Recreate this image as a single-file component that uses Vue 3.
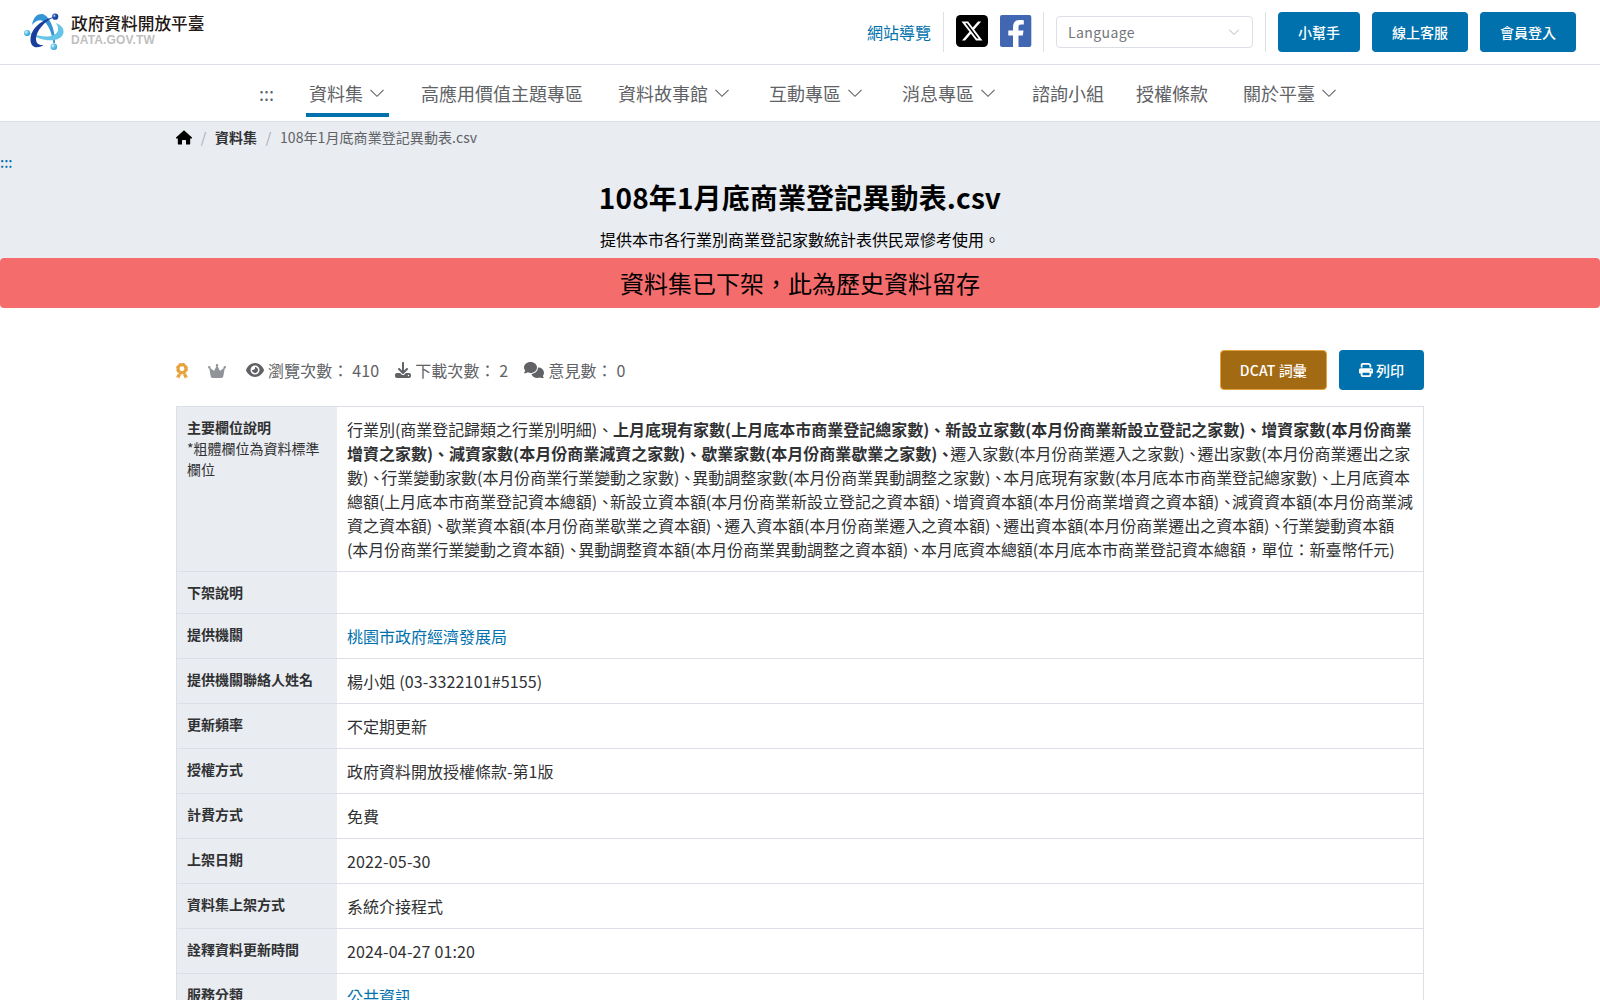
<script setup>
const nav = [
  { label: '資料集', sub: true, active: true },
  { label: '高應用價值主題專區' },
  { label: '資料故事館', sub: true },
  { label: '互動專區', sub: true },
  { label: '消息專區', sub: true },
  { label: '諮詢小組' },
  { label: '授權條款' },
  { label: '關於平臺', sub: true },
]
const actions = ['小幫手', '線上客服', '會員登入']

const fields = [
  { text: '行業別(商業登記歸類之行業別明細)' },
  { text: '上月底現有家數(上月底本市商業登記總家數)', std: true },
  { text: '新設立家數(本月份商業新設立登記之家數)', std: true },
  { text: '增資家數(本月份商業增資之家數)', std: true },
  { text: '減資家數(本月份商業減資之家數)', std: true },
  { text: '歇業家數(本月份商業歇業之家數)', std: true, tight: true },
  { text: '遷入家數(本月份商業遷入之家數)', tight: true },
  { text: '遷出家數(本月份商業遷出之家數)', tight: true },
  { text: '行業變動家數(本月份商業行業變動之家數)', tight: true },
  { text: '異動調整家數(本月份商業異動調整之家數)', tight: true },
  { text: '本月底現有家數(本月底本市商業登記總家數)', tight: true },
  { text: '上月底資本總額(上月底本市商業登記資本總額)', tight: true },
  { text: '新設立資本額(本月份商業新設立登記之資本額)', tight: true },
  { text: '增資資本額(本月份商業增資之資本額)', tight: true },
  { text: '減資資本額(本月份商業減資之資本額)', tight: true },
  { text: '歇業資本額(本月份商業歇業之資本額)', tight: true },
  { text: '遷入資本額(本月份商業遷入之資本額)', tight: true },
  { text: '遷出資本額(本月份商業遷出之資本額)', tight: true },
  { text: '行業變動資本額(本月份商業行業變動之資本額)', tight: true },
  { text: '異動調整資本額(本月份商業異動調整之資本額)', tight: true },
  { text: '本月底資本總額(本月底本市商業登記資本總額，單位：新臺幣仟元)', last: true },
]

const rows = [
  { label: '下架說明', value: '' },
  { label: '提供機關', value: '桃園市政府經濟發展局', link: true },
  { label: '提供機關聯絡人姓名', value: '楊小姐 (03-3322101#5155)', num: true },
  { label: '更新頻率', value: '不定期更新' },
  { label: '授權方式', value: '政府資料開放授權條款-第1版' },
  { label: '計費方式', value: '免費' },
  { label: '上架日期', value: '2022-05-30', num: true },
  { label: '資料集上架方式', value: '系統介接程式' },
  { label: '詮釋資料更新時間', value: '2024-04-27 01:20', num: true },
  { label: '服務分類', value: '公共資訊', link: true },
]
</script>

<template>
  <div class="page">
    <header class="top">
      <a class="logo">
        <svg width="42" height="40" viewBox="0 0 42 40">
          <defs>
            <radialGradient id="dotLight" cx=".35" cy=".35" r=".7">
              <stop offset="0" stop-color="#e8f8fd" /><stop offset=".4" stop-color="#6cc8e8" /><stop offset="1" stop-color="#2f9fd8" />
            </radialGradient>
            <radialGradient id="dotDark" cx=".35" cy=".35" r=".7">
              <stop offset="0" stop-color="#cfdcf5" /><stop offset=".4" stop-color="#1f4fae" /><stop offset="1" stop-color="#173d97" />
            </radialGradient>
          </defs>
          <path d="M8 13C9.500 5 13 2 18 2C25 3 31.500 17 31 31.500L29.300 31C28.500 24 26 16 21.500 10.500C17 6.500 12 8 8 13Z" fill="#3494d4" />
          <path d="M32 11C38 13.500 40 17 39.500 20.500C38.500 28 27 30.500 15 26.200C10 24.500 7 22.500 5 20.500C12 23.500 20 25 26 24.200C33.500 23 36.500 18 32 11Z" fill="#66c4e6" />
          <path d="M30 5C18 7.500 7 16 6.500 27.500C6.500 32.500 9 35.500 13 35.300C16 35.200 18 34.200 19.500 33C14 33.500 12 31 12 26.500C12.500 19 20 9.500 30 5Z" fill="#173f9b" />
          <circle cx="3.100" cy="21" r="3.100" fill="url(#dotLight)" />
          <circle cx="31.200" cy="4.700" r="3.100" fill="url(#dotDark)" />
          <circle cx="29.800" cy="34.800" r="3.300" fill="url(#dotLight)" />
        </svg>
        <span class="brand"><b>政府資料開放平臺</b><i>DATA.GOV.TW</i></span>
      </a>
      <div class="tools">
        <a class="sitemap">網站導覽</a>
        <span class="sep"></span>
        <svg class="x" width="32" height="32" viewBox="0 0 32 32">
          <rect width="32" height="32" rx="4.500" fill="#000" />
          <path transform="translate(4.300 4.300) scale(.97)" fill="#fff" d="M18.244 2.250h3.308l-7.227 8.260 8.502 11.240H16.170l-5.214-6.817L4.990 21.750H1.680l7.730-8.835L1.254 2.250H8.080l4.713 6.231zm-1.161 17.520h1.833L7.084 4.126H5.117z" />
        </svg>
        <svg class="fb" width="32" height="32" viewBox="0 0 32 32">
          <rect width="31.300" height="32" rx="2" fill="#4267b2" />
          <path fill="#fff" d="M13 32V20.500H8.300v-5H13v-3.400C13 7.400 15.500 5 19.400 5c1.800 0 3.600.1 4.400.3v4.300h-2.700c-2.100 0-2.600 1-2.600 2.500v3.400h5l-.7 5h-4.300V32z" />
        </svg>
        <span class="sep"></span>
        <div class="select">
          <span>Language</span>
          <svg width="14" height="14" viewBox="0 0 1024 1024"><path d="M150 340 512 690 874 340" fill="none" stroke="#a8abb2" stroke-width="62" /></svg>
        </div>
        <span class="sep"></span>
        <a v-for="a in actions" :key="a" class="btn">{{ a }}</a>
      </div>
    </header>

    <nav class="nav">
      <span class="access">:::</span>
      <a v-for="n in nav" :key="n.label" :class="{ sub: n.sub, active: n.active }">
        {{ n.label }}<svg v-if="n.sub" width="18" height="18" viewBox="0 0 1024 1024"><path d="M140 330 512 700 884 330" fill="none" stroke="#606266" stroke-width="62" /></svg>
      </a>
    </nav>

    <section class="hero">
      <div class="crumbs">
        <svg width="16" height="16" viewBox="0 0 16 16"><path d="M8 .3 0 7.500V8.200c0 .3.200.4.500.4h1.300v5.100c0 .6.300.9.900.9H6v-4c0-.4.200-.6.600-.6h2.800c.4 0 .6.200.6.600v4h3.300c.6 0 .9-.3.900-.9V8.600h1.300c.3 0 .5-.1.500-.4V7.500z" fill="#000" /></svg>
        <i>/</i><b>資料集</b><i>/</i><span>108年1月底商業登記異動表.csv</span>
      </div>
      <a class="anchor">:::</a>
      <h1>108年1月底商業登記異動表.csv</h1>
      <p>提供本市各行業別商業登記家數統計表供民眾慘考使用。</p>
    </section>
    <div class="alert">資料集已下架，此為歷史資料留存</div>

    <main>
      <div class="bar">
        <svg class="award" width="12" height="16" viewBox="0 0 12 16">
          <circle cx="6" cy="5.700" r="3.900" fill="none" stroke="#e6a23c" stroke-width="2.900" />
          <circle cx="6" cy="5.700" r="5.300" fill="none" stroke="#e6a23c" stroke-width="1.300" stroke-dasharray="2.800 1.360" />
          <path d="M2 10.500 0 14.400l2-.1 1.100 1.500L5 11.700zM10 10.500l2 3.900-2-.1-1.100 1.500L7 11.700z" fill="#e6a23c" />
        </svg>
        <svg class="crown" width="18" height="16" viewBox="0 0 576 512"><path fill="#909399" d="M309 106c11-7 19-19 19-34a40 40 0 1 0-80 0c0 15 8 27 19 34l-57 115c-9 18-33 23-49 11l-89-71c5-7 8-15 8-25a40 40 0 1 0-40 40h1l46 251c5 30 32 53 63 53h276c31 0 58-22 63-53l46-251h1a40 40 0 1 0-40-40c0 9 3 18 8 25l-89 71c-16 13-40 7-49-11z" /></svg>
        <span class="stat">
          <svg width="18" height="16" viewBox="0 0 576 512"><path d="M288 32c-81 0-146 37-193 81C48 156 17 208 3 244c-3 8-3 17 0 25 14 35 45 87 92 131 47 44 112 80 193 80s146-37 193-80c47-44 78-96 93-131 3-8 3-17 0-25-15-36-46-88-93-131-47-44-112-81-193-81zM144 256a144 144 0 1 1 288 0 144 144 0 1 1-288 0zm144-64c0 35-29 64-64 64-7 0-14-1-20-3-6-2-12 2-12 7 0 7 1 14 3 21 14 51 67 82 118 68s82-67 68-118c-11-42-48-69-89-71-6 0-9 6-7 12 2 6 3 13 3 20z" /></svg>
          瀏覽次數： 410
        </span>
        <span class="stat">
          <svg width="16" height="16" viewBox="0 0 512 512"><path d="M288 32c0-18-14-32-32-32s-32 14-32 32v243l-73-74c-13-12-33-12-46 0-12 13-12 33 0 46l128 128c13 12 33 12 46 0l128-128c12-13 12-33 0-46-13-12-33-12-46 0l-73 74zM64 352c-35 0-64 29-64 64v32c0 35 29 64 64 64h384c35 0 64-29 64-64v-32c0-35-29-64-64-64H347l-46 45c-25 25-65 25-90 0l-46-45zm368 56a24 24 0 1 1 0 48 24 24 0 1 1 0-48z" /></svg>
          下載次數： 2
        </span>
        <span class="stat">
          <svg width="20" height="16" viewBox="0 0 640 512"><path d="M208 352c115 0 208-79 208-176S323 0 208 0 0 79 0 176c0 39 15 74 39 104-3 10-9 23-15 32-6 10-12 17-16 21-6 4-8 12-6 19 3 6 9 10 15 10 22 0 43-6 62-13 18-7 34-16 45-23 26 16 54 26 84 26zM448 176c0 112-99 197-213 207 24 74 104 129 197 129 30 0 59-6 84-16 12 7 28 16 46 23s40 13 62 13c7 0 13-5 15-11 2-7 0-14-5-18-5-5-11-12-17-21-5-9-11-22-15-33 24-29 38-65 38-104 0-93-84-169-193-176 0 2 1 5 1 7z" /></svg>
          意見數： 0
        </span>
        <span class="grow"></span>
        <a class="btn dcat">DCAT 詞彙</a>
        <a class="btn print">
          <svg width="14" height="14" viewBox="0 0 512 512"><path fill="#fff" fill-rule="evenodd" d="M128 0C93 0 64 29 64 64v96h64V64h227l29 29v67h64V93c0-17-7-33-19-45L400 19C388 7 372 0 355 0zM384 352v96H128v-96zm64 32h32c18 0 32-14 32-32v-96c0-35-29-64-64-64H64c-35 0-64 29-64 64v96c0 18 14 32 32 32h32v64c0 35 29 64 64 64h256c35 0 64-29 64-64zM432 248a24 24 0 1 1 0 48 24 24 0 1 1 0-48z" /></svg>列印
        </a>
      </div>

      <div class="table">
        <div class="row">
          <div class="th"><b>主要欄位說明</b><br>*粗體欄位為資料標準欄位</div>
          <div class="td list"><span v-for="f in fields" :key="f.text" :class="{ std: f.std, tight: f.tight }">{{ f.text }}<template v-if="!f.last">、</template></span></div>
        </div>
        <div v-for="r in rows" :key="r.label" class="row">
          <div class="th"><b>{{ r.label }}</b></div>
          <div class="td" :class="{ num: r.num }"><a v-if="r.link">{{ r.value }}</a><template v-else>{{ r.value }}</template></div>
        </div>
      </div>
    </main>
  </div>
</template>

<style>
body { margin: 0; overflow: hidden; }
</style>

<style scoped>
.page {
  height: 1000px;
  overflow: hidden;
  background: #fff;
  color: #303133;
  font: 16px/24px "Noto Sans CJK TC", sans-serif;
}
.page * { box-sizing: border-box; }
svg { display: block; flex: none; }
.top {
  height: 65px;
  padding: 0 24px;
  border-bottom: 1px solid #dcdfe6;
  display: flex;
  justify-content: space-between;
  align-items: center;
}
.logo { display: flex; gap: 5px; align-items: center; }
.brand { display: flex; flex-direction: column; padding-bottom: 3px; }
.brand b { font-size: 16.700px; line-height: 19px; font-weight: 500; color: #231815; }
.brand i { font: bold 12px/14px "Liberation Sans", sans-serif; color: #bfbfbf; letter-spacing: .13px; }
.tools { display: flex; align-items: center; gap: 12px; }
.sitemap { color: #0071ad; }
.sep { width: 1px; height: 40px; background: #dcdfe6; }
.x, .fb { margin-top: -2px; }
.fb { margin-right: -1px; }
.select {
  width: 197px;
  height: 32px;
  padding: 0 11px;
  border: 1px solid #dcdfe6;
  border-radius: 4px;
  display: flex;
  align-items: center;
  justify-content: space-between;
  font-size: 14px;
  letter-spacing: .4px;
  color: #73767a;
}
.btn {
  height: 40px;
  padding: 0 20px;
  border-radius: 4px;
  background: #0071ad;
  color: #fff;
  font-size: 14px;
  font-weight: 500;
  display: flex;
  align-items: center;
}
.nav {
  height: 57px;
  padding-left: 259px;
  border-bottom: 1px solid #dcdfe6;
  display: flex;
  gap: 32px;
  font-size: 18px;
  line-height: 40px;
  color: #606266;
}
.nav a { height: 52px; padding-top: 8px; display: flex; }
.access { width: 15px; padding-top: 8px; }
.nav .sub { padding: 8px 3px 0; }
.nav .sub svg { margin: 11px 0 0 5px; }
.nav .active { border-bottom: 4px solid #0071ad; }
.hero { height: 136px; background: #e9ecf1; text-align: center; color: #000; }
.crumbs {
  height: 31px;
  padding-left: 176px;
  display: flex;
  align-items: center;
  font-size: 14px;
  line-height: 31px;
  color: #606266;
}
.crumbs i { font-style: normal; color: #a8abb2; width: 23px; text-align: center; }
.crumbs b { color: #303133; }
.crumbs span { letter-spacing: .07px; }
.anchor { display: block; text-align: left; height: 24px; line-height: 19px; font-size: 14px; color: #0071ad; font-weight: 500; }
.hero h1 { margin: -1px 0 0; font-size: 28px; line-height: 42px; font-weight: 700; letter-spacing: .13px; }
.hero p { margin: 9px 0 0; }
.alert {
  height: 50px;
  border-radius: 4px;
  background: #f56c6c;
  color: #000;
  font-size: 24px;
  line-height: 49px;
  text-align: center;
}
main { padding: 42px 176px 0; }
.bar { display: flex; align-items: center; height: 40px; color: #606266; }
.stat { display: flex; align-items: center; gap: 4px; margin-right: 16px; white-space: nowrap; letter-spacing: .1px; }
.stat svg path { fill: #606266; }
.award { margin-top: 1px; }
.crown { margin: 1px 20px 0; }
.grow { flex: 1; }
.dcat { background: #a36a14; border: 1px solid #e6a23c; padding: 0 19px; margin-right: 12px; letter-spacing: .12px; }
.print svg { margin-right: 3px; }
.table { margin-top: 16px; border: 1px solid #dcdfe6; }
.row { display: flex; border-bottom: 1px solid #dcdfe6; }
.th { width: 160px; padding: 10px; background: #e9ecf1; font-size: 14px; line-height: 21px; flex: none; }
.td { flex: 1; padding: 10px; }
.td a { color: #0071ad; }
.list { padding-right: 8px; letter-spacing: -.04px; }
.num { letter-spacing: .15px; }
.std { font-weight: 700; letter-spacing: 0; }
.tight { margin-right: -3px; }
</style>
